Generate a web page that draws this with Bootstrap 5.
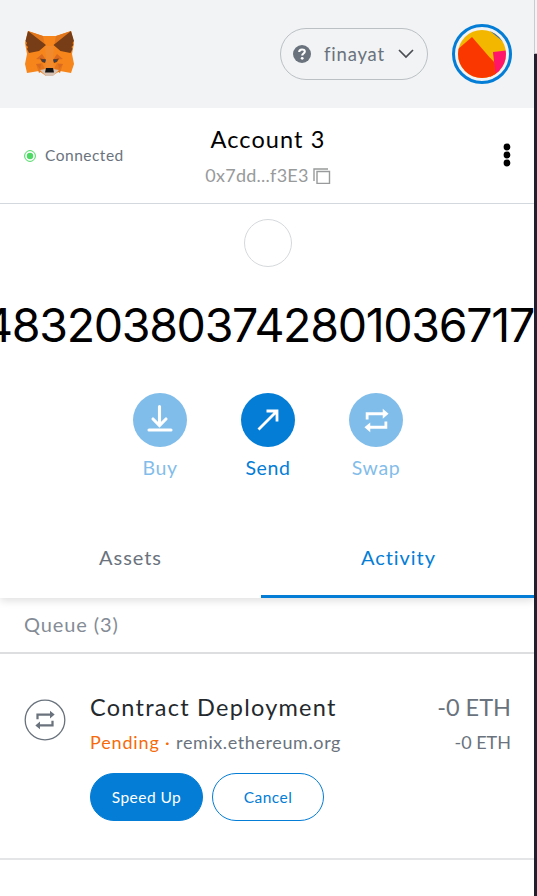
<!DOCTYPE html>
<html lang="en">
<head>
<meta charset="utf-8">
<meta name="viewport" content="width=device-width, initial-scale=1">
<title>Wallet</title>
<link href="https://cdn.jsdelivr.net/npm/bootstrap@5.3.0/dist/css/bootstrap.min.css" rel="stylesheet">
<style>
:root{--blue:#037dd6;--grey:#6a737d}
body{font-family:Lato,"Open Sans",sans-serif;background:#20202f;height:896px;overflow:hidden;line-height:1.2}
.edge{width:3px;height:54px;background:#f2f3f4;border-left:1px solid #c9cccf;border-bottom:1px solid #b5b5ba}
.popup{width:534px;height:896px}
.topbar{height:108px;background:#f2f3f4;padding:0 22px 0 24px}
.network{width:148px;height:52px;border:1px solid #bbc0c5;padding:0 13px 0 12px;color:var(--grey)}
.avatar{width:60px;height:60px}
.account-bar{height:96px;border-bottom:1px solid #d2d8dd;display:grid;grid-template-columns:180px 1fr 180px}
.account-id{padding-left:2px}
.address-line{margin-top:12px}
.menu-dots{padding:0 23px 2px 0}
.balance-token{width:48px;height:48px;border:1px solid #d6d9dc;margin:15px 0 0 2px}
.balance{height:60px;margin-top:29px;margin-left:-17px;font-family:Inter,sans-serif;font-size:46.5px;letter-spacing:-1.3px;color:#000}
.actions{margin-top:37px;gap:54px;padding-left:2px}
.action{width:54px;color:var(--blue)}
.disc{width:54px;height:54px;background:var(--blue)}
.tabs{margin-top:36px;height:83px;box-shadow:0 3px 8px rgba(0,0,0,.12);clip-path:inset(0 0 -16px 0)}
.tab-a{width:261px;color:var(--grey);padding-top:1px}
.tab-b{color:var(--blue);border-bottom:3px solid var(--blue);padding:4px 0 0 2px}
.queue{height:56px;padding:0 0 3px 24px;border-bottom:2px solid #dcdee0;color:#848c96}
.tx{height:206px;border-bottom:2px solid #e4e5e7;padding:37px 23px 0 24px}
.tx-icon{width:42px}
.tx-body{padding-top:2px}
.tx-sub{margin-top:10px}
.tx-buttons{margin-top:20px;gap:9px}
.pill{height:48px;border-radius:24px;border:1px solid var(--blue);color:var(--blue);padding:0}
.pill-solid{background:var(--blue);color:#fff;width:113px}
.pill-line{width:112px}
.t-net{font-size:18.5px;letter-spacing:.8px}
.t-conn{font-size:15.5px;letter-spacing:.5px;color:var(--grey);margin-left:9px}
.t-acc{font-size:23.5px;letter-spacing:1.1px;color:#000}
.t-addr{font-size:18px;letter-spacing:.25px;color:#989a9b}
.t-act{font-size:19.5px;letter-spacing:.6px;margin-top:9px}
.t-tab{font-size:20px;letter-spacing:.95px}
.t-queue{font-size:20px;letter-spacing:.9px}
.t-title{font-size:23.5px;letter-spacing:1.25px;color:#24292e}
.t-amt{font-size:23.5px;color:var(--grey)}
.t-sub{font-size:18px;color:var(--grey)}
.t-site{letter-spacing:.6px}
.t-pend{color:#f66a0a;letter-spacing:.85px}
.t-btn{font-size:15.5px;letter-spacing:.45px}
</style>
<script src="https://cdn.jsdelivr.net/npm/bootstrap@5.3.0/dist/js/bootstrap.bundle.min.js"></script>
</head>
<body class="d-flex align-items-start">
<svg width="0" height="0" class="position-absolute"><defs>
<symbol id="swap" viewBox="0 0 24 24"><path d="M3 11V5.500h16M21 13v5.500H5" fill="none" stroke="currentColor" stroke-width="2.700"/><path d="M18 .8v9.400l5.600-4.700zM6 13.800v9.400L.4 18.500z" fill="currentColor"/></symbol>
</defs></svg>
<main class="popup bg-white d-flex flex-column overflow-hidden flex-shrink-0">
<header class="topbar d-flex align-items-center">
<svg width="52" height="48" viewBox="0 0 52 48" class="me-auto">
<path fill="#f6851b" d="M4 1l15 5h13l15-5 3 12-2 11 2 10-3 9-11-2-8 5h-6l-7-5-12 2-2-9 2-10L1 13z"/>
<path fill="#e2761b" d="M4 1l15 5 2 10zM47 1L32 6l-2 10z"/>
<path fill="#763d16" d="M4 1L1.500 11 3 13l-1 2 2 2-1 2 2 4 10-2 7-6zM47 1l3 10-1.500 2 1 2-2 2 1 2-2 4-10-2-7-6z"/>
<path fill="#e4761b" d="M12 34l6-1 3 6-6 4zM39 34l-6-1-3 6 6 4z"/>
<path fill="#d96a1f" d="M12 34h5l-1 5zM39 34h-5l1 5zM12 29l6-5 4 6zM39 29l-6-5-4 6z"/>
<path fill="#f08a2c" d="M21 16h9l-1 16 2 8H20l2-8z"/>
<path fill="#763d16" d="M16 28.500l6 1-1 3.500-3-1zM35 28.500l-6 1 1 3.500 3-1z"/>
<path fill="#384153" d="M18.500 29.500h3l-.5 3-2.500-1zM32.500 29.500h-3l.5 3 2.500-1z"/>
<path fill="#d7c1b3" d="M16 40l6-1h7l6 1-6 6h-7z"/>
<path fill="#161616" d="M22 38h7l1 4.500h-9z"/>
</svg>
<div class="network rounded-pill d-flex align-items-center">
<svg width="18" height="18" viewBox="0 0 18 18"><circle cx="9" cy="9" r="9" fill="#6a737d"/><path d="M6.200 7c0-3.400 5.600-3.300 5.600-.4 0 1.900-2.600 1.900-2.600 3.900" fill="none" stroke="#fff" stroke-width="2.100"/><circle cx="9.200" cy="13.300" r="1.400" fill="#fff"/></svg>
<span class="t-net ms-auto">finayat</span>
<svg class="ms-auto" width="16" height="10" viewBox="0 0 16 10"><path d="M1 1l7 7 7-7" fill="none" stroke="#4a4d52" stroke-width="1.700"/></svg>
</div>
<svg class="avatar ms-4" viewBox="0 0 60 60"><defs><clipPath id="face"><circle cx="30" cy="30" r="24"/></clipPath></defs><circle cx="30" cy="30" r="28.500" fill="#f2f3f4" stroke="#037dd6" stroke-width="3"/><g clip-path="url(#face)"><path fill="#f3b700" d="M0 0h60v60H0z"/><path fill="#2c6fc4" d="M38 7l16 13V5z"/><path fill="#fb3700" d="M0 30L20 13l32 37-10 10H0z"/><path fill="#ff166b" d="M41 28l16-2v30H44z"/><path fill="#fb3700" d="M38 34l4 4 2 14-6 4z"/></g></svg>
</header>
<section class="account-bar align-items-center">
<div class="d-flex align-items-center ps-4"><svg width="12" height="12" viewBox="0 0 12 12"><circle cx="6" cy="6" r="5.400" fill="none" stroke="#4cd964" stroke-width="1"/><circle cx="6" cy="6" r="3.200" fill="#4cd964"/></svg><span class="t-conn">Connected</span></div>
<div class="account-id text-center"><div><span class="t-acc">Account 3</span></div><div class="address-line d-flex align-items-center justify-content-center"><span class="t-addr">0x7dd...f3E3</span><svg class="ms-1" width="18" height="16" viewBox="0 0 18 16"><path d="M1 13V1h14M4 3.500h12.500V15.500H4z" fill="none" stroke="#989a9b" stroke-width="1.400"/></svg></div></div>
<div class="menu-dots d-flex justify-content-end"><svg width="8" height="24" viewBox="0 0 8 24"><circle cx="4" cy="4" r="3.400"/><circle cx="4" cy="12" r="3.400"/><circle cx="4" cy="20" r="3.400"/></svg></div>
</section>
<div class="balance-token rounded-circle align-self-center flex-shrink-0"></div>
<div class="balance d-flex align-items-center text-nowrap flex-shrink-0">483203803742801036717</div>
<nav class="actions d-flex justify-content-center">
<div class="action d-flex flex-column align-items-center opacity-50"><div class="disc rounded-circle d-flex align-items-center justify-content-center"><svg class="mb-1" width="26" height="28" viewBox="0 0 26 28"><path d="M12.500 2.500v18M6 15l6.500 6.500L19 15M2 26h22" fill="none" stroke="#fff" stroke-width="3.100" stroke-linecap="round"/></svg></div><span class="t-act">Buy</span></div>
<div class="action d-flex flex-column align-items-center"><div class="disc rounded-circle d-flex align-items-center justify-content-center"><svg width="24" height="24" viewBox="0 0 24 24"><path d="M2.500 21.500L21 3M10.500 3H21v10.500" fill="none" stroke="#fff" stroke-width="2.800"/></svg></div><span class="t-act">Send</span></div>
<div class="action d-flex flex-column align-items-center opacity-50"><div class="disc rounded-circle d-flex align-items-center justify-content-center text-white"><svg width="25" height="25"><use href="#swap"/></svg></div><span class="t-act">Swap</span></div>
</nav>
<div class="tabs d-flex flex-shrink-0"><div class="tab-a d-flex align-items-center justify-content-center"><span class="t-tab">Assets</span></div><div class="tab-b flex-fill d-flex align-items-center justify-content-center"><span class="t-tab">Activity</span></div></div>
<div class="queue d-flex align-items-center flex-shrink-0"><span class="t-queue">Queue (3)</span></div>
<article class="tx d-flex flex-shrink-0">
<svg class="tx-icon mt-2" height="42" viewBox="0 0 42 42"><circle cx="21" cy="21" r="19.800" fill="none" stroke="#6a737d" stroke-width="1.300"/><use href="#swap" x="11" y="11" width="20" height="20" color="#6a737d"/></svg>
<div class="tx-body flex-fill ms-4"><div class="d-flex justify-content-between"><span class="t-title">Contract Deployment</span><span class="t-amt">-0 ETH</span></div>
<div class="t-sub tx-sub d-flex justify-content-between"><div><span class="t-pend">Pending</span><span class="t-pend"> · </span><span class="t-site">remix.ethereum.org</span></div><span>-0 ETH</span></div>
<div class="tx-buttons d-flex"><button class="btn pill pill-solid"><span class="t-btn">Speed Up</span></button><button class="btn pill pill-line"><span class="t-btn">Cancel</span></button></div></div>
</article>
</main>
<aside class="edge"></aside>
</body>
</html>
